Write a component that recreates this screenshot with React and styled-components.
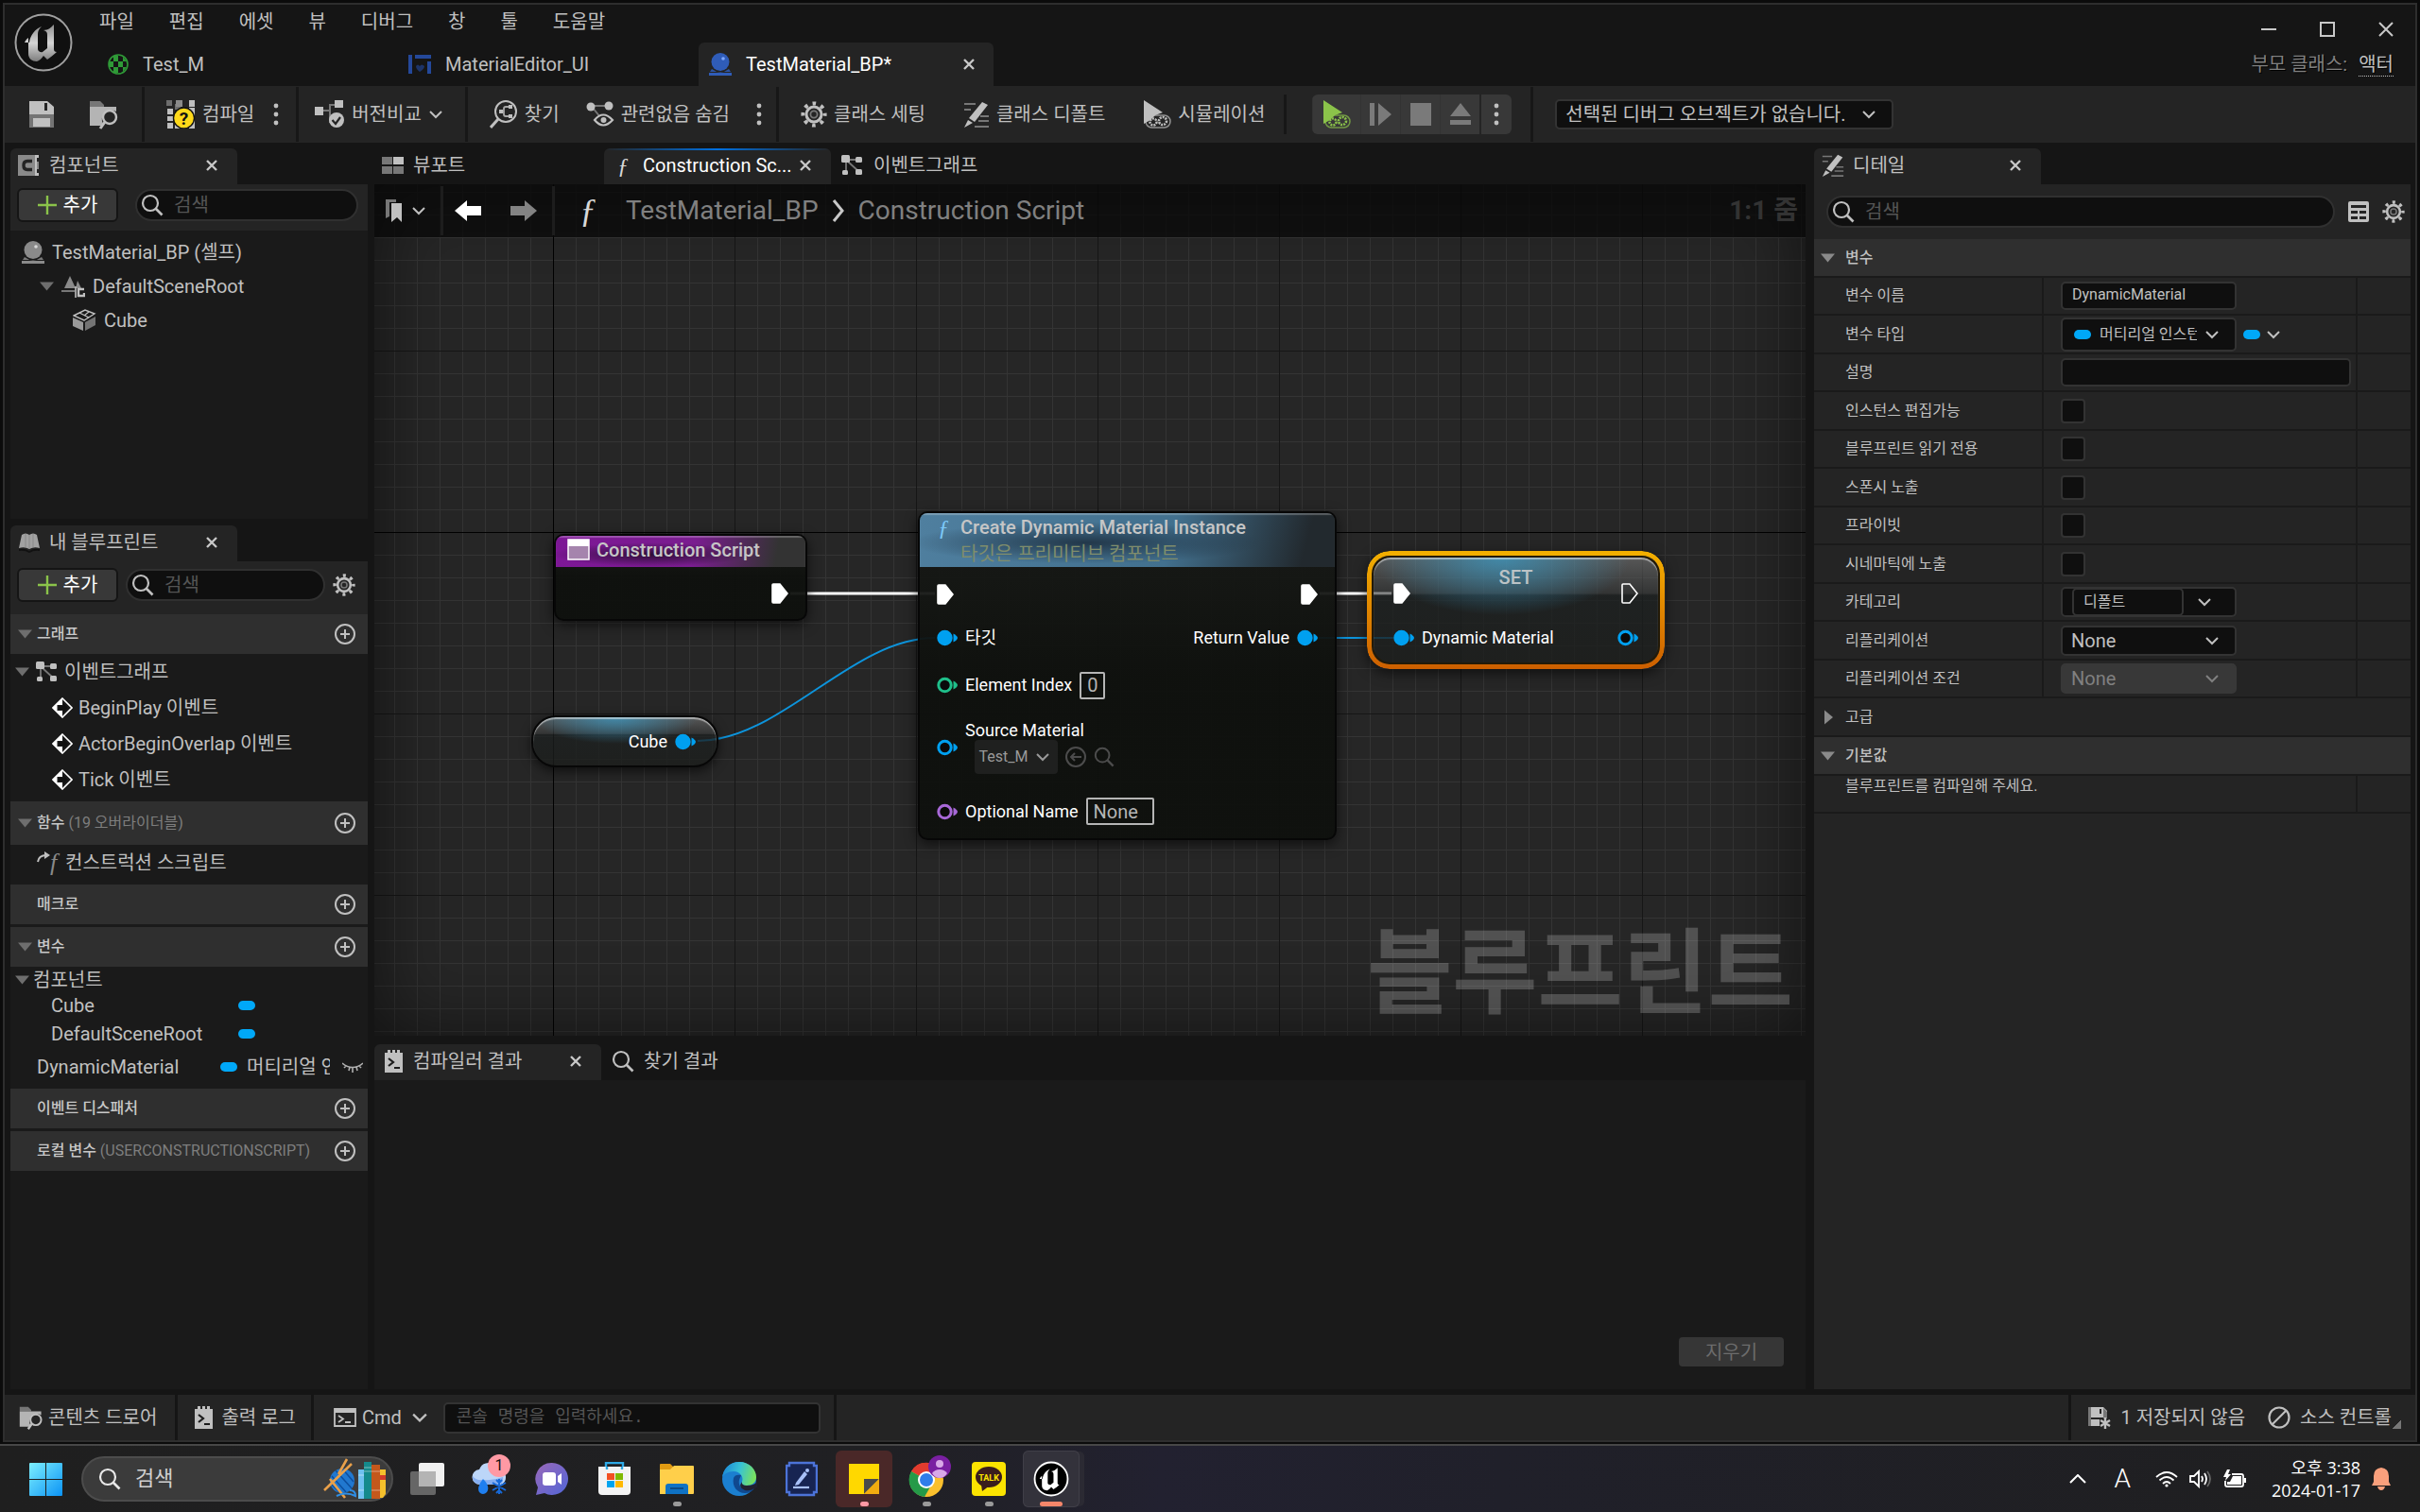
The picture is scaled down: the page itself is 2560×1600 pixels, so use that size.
import React from 'react'
import styled, { createGlobalStyle, css } from 'styled-components'

const GlobalStyle = createGlobalStyle`
  * { box-sizing: border-box; }
  body {
    margin: 0;
    background: #0b0b0b;
    color: #c0c0c0;
    font-family: Roboto, "Noto Sans CJK KR", sans-serif;
    font-size: 20px;
    line-height: 24px;
    font-weight: 400;
  }
  button, input, select {
    margin: 0;
    padding: 0;
    border: none;
    background: none;
    color: inherit;
    font: inherit;
  }
  a { color: inherit; text-decoration: none; }
  svg { display: block; flex: none; }
  h2, ul { margin: 0; padding: 0; font: inherit; list-style: none; }
`

/* ---------- small icons ---------- */

const Chevron = ({ size = 14, color = '#c0c0c0' }) => (
  <svg width={size} height={size} viewBox="0 0 14 14" fill="none" stroke={color} strokeWidth="2">
    <path d="M1 4l6 6 6-6" />
  </svg>
)

const Triangle = ({ right, color = '#6e6e6e' }) => (
  <svg width="15" height="16" viewBox="0 0 15 16" fill={color}>
    {right ? <path d="M4 0.5l9 7.5-9 7.5z" /> : <path d="M0 3.5h15l-7.5 9z" />}
  </svg>
)

const SearchIcon = ({ size = 24, color = '#c0c0c0' }) => (
  <svg width={size} height={size} viewBox="0 0 24 24" fill="none" stroke={color} strokeWidth="2.2">
    <circle cx="10" cy="10" r="8" />
    <path d="M15.5 15.5l7 7" strokeWidth="2.6" />
  </svg>
)

const CloseIcon = () => (
  <svg width="12" height="12" viewBox="0 0 12 12" stroke="#c8c8c8" strokeWidth="2.4">
    <path d="M1 1l10 10M11 1L1 11" />
  </svg>
)

const Dots = () => (
  <svg width="6" height="24" viewBox="0 0 6 24" fill="#c0c0c0">
    <circle cx="3" cy="3" r="2.4" />
    <circle cx="3" cy="12" r="2.4" />
    <circle cx="3" cy="21" r="2.4" />
  </svg>
)

const GearIcon = ({ size = 24 }) => (
  <svg width={size} height={size} viewBox="0 0 28 28" fill="none" stroke="#c0c0c0">
    <circle cx="14" cy="14" r="8" strokeWidth="3" />
    <circle cx="14" cy="14" r="3.6" stroke="#777" strokeWidth="1.8" />
    <circle cx="14" cy="14" r="11.6" strokeWidth="4" strokeDasharray="3.6 5.51" strokeDashoffset="1.8" />
  </svg>
)

const PlusCircle = () => (
  <svg width="22" height="22" viewBox="0 0 22 22" fill="none" stroke="#c0c0c0" strokeWidth="2">
    <circle cx="11" cy="11" r="10" />
    <path d="M11 6v10M6 11h10" />
  </svg>
)

const PlusGreen = () => (
  <svg width="20" height="20" viewBox="0 0 20 20" stroke="#8bc34a" strokeWidth="2.4">
    <path d="M10 0v20M0 10h20" />
  </svg>
)

const SaveIcon = () => (
  <svg width="28" height="28" viewBox="0 0 28 28" fill="#c0c0c0">
    <path d="M1 0h19l7 6v8H1z" />
    <path d="M17 2h3v8h-3z" fill="#242424" />
    <path d="M1 14h26v14H1z" fill="#747474" />
    <path d="M5 18h18v9H5z" />
  </svg>
)

const FolderFind = ({ size = 32 }) => (
  <svg width={size} height={size} viewBox="0 0 32 32">
    <path d="M1 4V2h11l4 4h0v2H1z" fill="#777" />
    <path d="M1 8h28v5a10 10 0 0 0-14 13v2H1z" fill="#b4b4b4" />
    <circle cx="22" cy="19" r="7" fill="none" stroke="#c0c0c0" strokeWidth="2.4" />
    <path d="M17 24l-5 7" stroke="#c0c0c0" strokeWidth="3" />
  </svg>
)

const CompileIcon = () => (
  <svg width="31" height="30" viewBox="0 0 31 30">
    <path d="M0 0h6v6H0zM9 4h6v6H9z" fill="#6d6d6d" />
    <path d="M10 0h7v7h-7zM16 8h6v6h-6z" fill="#8a8a8a" />
    <path d="M24 0h6v7h-6zM1 9h6v6H1zM1 17h6v5H1zM1 24h6v6H1zM9 23h13v7H9zM24 8h6v22h-6z" fill="#c0c0c0" />
    <circle cx="18.5" cy="19" r="11" fill="#ffd91a" stroke="#111" strokeWidth="1.4" />
    <text x="18.5" y="26" textAnchor="middle" fontFamily="Roboto" fontWeight="700" fontSize="19" fill="#111">?</text>
  </svg>
)

const DiffIcon = () => (
  <svg width="32" height="30" viewBox="0 0 32 30">
    <path d="M9 11h7V5h6M16 11v12h4" fill="none" stroke="#777" strokeWidth="2" />
    <path d="M0 7h9v9H0zM21 0h9v8h-9z" fill="#c0c0c0" />
    <circle cx="23" cy="21" r="8" fill="#c0c0c0" />
    <path d="M18.5 21l3.5 4 5-7" fill="none" stroke="#242424" strokeWidth="2.2" />
  </svg>
)

const FindIcon = () => (
  <svg width="30" height="30" viewBox="0 0 30 30" fill="none" stroke="#c0c0c0">
    <circle cx="17" cy="12" r="11" strokeWidth="2" />
    <path d="M9 20l-8 9" strokeWidth="3" />
    <path d="M12 12h3M22 7h-5q-2 0-2 2v6q0 2 2 2h5" stroke="#a8a8a8" strokeWidth="1.8" />
    <path d="M10 12h4M20 7h4M20 17h4" strokeWidth="4" />
  </svg>
)

const HideIcon = () => (
  <svg width="30" height="28" viewBox="0 0 30 28">
    <path d="M6 5h17M7 7l8 10" stroke="#777" strokeWidth="2" />
    <circle cx="5" cy="6" r="4.5" fill="#c0c0c0" />
    <circle cx="24" cy="5" r="4.5" fill="#c0c0c0" />
    <path d="M9 20q9-11 19 0q-10 11-19 0z" fill="#242424" stroke="#c0c0c0" strokeWidth="2.2" />
    <circle cx="18.5" cy="20" r="3" fill="#c0c0c0" />
  </svg>
)

const PencilIcon = ({ size = 28 }) => (
  <svg width={size} height={size} viewBox="0 0 28 28">
    <path d="M1 3h12M1 9h7M18 16h9M16 21h11M12 27h15" stroke="#777" strokeWidth="1.8" />
    <path d="M20 1l6 3-14 18-6-4z" fill="#c0c0c0" />
    <path d="M5 20l5 3-9 5z" fill="#c0c0c0" />
  </svg>
)

const PlayGear = ({ color }) => (
  <svg width="30" height="32" viewBox="0 0 30 32" fill="none" stroke={color}>
    <path d="M1 1l20 13-8 3-5 5-7 4z" fill={color} stroke="none" />
    <rect x="3" y="17" width="26" height="13" rx="6.5" strokeWidth="1.5" opacity="0.7" />
    <circle cx="11" cy="24" r="3.5" strokeWidth="2.5" strokeDasharray="2 1" />
    <circle cx="21" cy="23" r="4" strokeWidth="2.6" strokeDasharray="2 1" />
  </svg>
)

const StepIcon = () => (
  <svg width="24" height="26" viewBox="0 0 24 26" fill="#7a7a7a">
    <path d="M0 1h5v24H0zM9 1l14 12L9 25z" />
  </svg>
)
const StopIcon = () => (
  <svg width="24" height="26" viewBox="0 0 24 26" fill="#7a7a7a"><path d="M1 1h22v24H1z" /></svg>
)
const EjectIcon = () => (
  <svg width="24" height="26" viewBox="0 0 24 26" fill="#7a7a7a">
    <path d="M12 1l11 14H1zM1 19h22v5H1z" />
  </svg>
)

const ComponentIcon = () => (
  <svg width="22" height="22" viewBox="0 0 22 22">
    <path d="M0 0h22v3h-3v4h3v8h-3v4h3v3H0z" fill="#8a8a8a" />
    <path d="M15 6.5H10Q6 6.500 6 11t4 4.500h5" fill="none" stroke="#242424" strokeWidth="3.4" />
    <path d="M18 0h4v3h-2v16h2v3h-4z" fill="#c0c0c0" />
  </svg>
)

const SphereIcon = ({ color = '#8a8a8a', light = '#d8d8d8' }) => (
  <svg width="24" height="24" viewBox="0 0 24 24" fill={color}>
    <circle cx="12" cy="9.5" r="9.5" />
    <path d="M3 17q9 7 18 0l2 3H1z" opacity="0.85" />
    <path d="M0 21h24v3H0z" />
    <circle cx="15" cy="6" r="1.8" fill={light} />
  </svg>
)

const SceneIcon = () => (
  <svg width="25" height="24" viewBox="0 0 25 24">
    <path d="M9 1l6 13H3zM17 6l4 8h-6z" fill="#8a8a8a" />
    <path d="M0 16h14v2H0z" fill="#777" />
    <path d="M24 15h-6v7h6v-3" fill="none" stroke="#c0c0c0" strokeWidth="2.4" />
    <path d="M15 12v12" stroke="#c0c0c0" strokeWidth="1.6" />
  </svg>
)

const CubeIcon = () => (
  <svg width="25" height="24" viewBox="0 0 25 24">
    <path d="M0 9l11 5v9L0 18z" fill="#9a9a9a" />
    <path d="M24 8l-11 6v9l11-6z" fill="#747474" />
    <path d="M1 7l12-6 10 4-11 7z" fill="#1a1a1a" stroke="#c0c0c0" strokeWidth="1.4" />
    <path d="M7 4l10 5M12 7l5-4" stroke="#c0c0c0" strokeWidth="1.2" />
  </svg>
)

const BookIcon = () => (
  <svg width="24" height="22" viewBox="0 0 24 22">
    <path d="M1 17L4 3q4-3 8 0 4-3 8 0l3 14q-6-2-11 1-5-3-11-1z" fill="#a2a2a2" />
    <path d="M12 3v15M8 2v14M16 2v14" stroke="#8a8a8a" strokeWidth="1" />
    <path d="M1 18q6-1 11 2 5-3 11-2v2q-6-1-11 2-5-3-11-2z" fill="#111" />
  </svg>
)

const GraphIcon = () => (
  <svg width="23" height="22" viewBox="0 0 23 22">
    <path d="M6 5h12M5 6v12M7 7l12 11" stroke="#777" strokeWidth="1.8" />
    <rect x="0" y="0" width="9" height="8" rx="1.5" fill="#c0c0c0" />
    <rect x="15" y="2" width="7" height="6" rx="1.5" fill="#c0c0c0" />
    <rect x="1" y="16" width="6" height="5" rx="1.5" fill="#c0c0c0" />
    <rect x="15" y="15" width="7" height="6" rx="1.5" fill="#c0c0c0" />
  </svg>
)

const ViewportIcon = () => (
  <svg width="23" height="18" viewBox="0 0 23 18">
    <path d="M0 0h11v8H0zM0 10h11v8H0zM12 10h11v8H12z" fill="#777" />
    <path d="M12 0h11v8H12z" fill="#c0c0c0" />
  </svg>
)

const EventIcon = () => (
  <svg width="22" height="22" viewBox="0 0 22 22">
    <path d="M11 1l10 10-10 10L1 11z" fill="none" stroke="#fff" strokeWidth="1.6" />
    <path d="M11 1v7H5.5v6H11v7L1 11z" fill="#fff" />
    <path d="M7 9h5V6l5 5-5 5v-3H7z" fill="#111" />
  </svg>
)

const OverrideIcon = () => (
  <svg width="14" height="12" viewBox="0 0 14 12" fill="none" stroke="#c0c0c0" strokeWidth="2">
    <path d="M1 11q1-7 9-7" />
    <path d="M8 0l6 4-6 4z" fill="#c0c0c0" stroke="none" />
  </svg>
)

const EyeClosed = () => (
  <svg width="22" height="12" viewBox="0 0 22 12" fill="none" stroke="#b0b0b0" strokeWidth="1.6">
    <path d="M0 2q11 9 22 0M4 5L2 7M8 6L7 10M11 7v5M15 6l1 4M18 5l2 2" />
  </svg>
)

const LogIcon = () => (
  <svg width="19" height="24" viewBox="0 0 19 24">
    <path d="M0 3h3V0h3v3h2V0h3v3h2V0h3v3h3v21H0z" fill="#c0c0c0" />
    <path d="M4 9l5 4-5 4M10 19h6" fill="none" stroke="#1c1c1c" strokeWidth="2.2" />
  </svg>
)

const TerminalIcon = () => (
  <svg width="24" height="20" viewBox="0 0 24 20" fill="none" stroke="#c0c0c0" strokeWidth="1.8">
    <path d="M1 1h22v18H1z" />
    <path d="M1 3h22" strokeWidth="4" />
    <path d="M5 8l5 3.500L5 15M12 15h6" />
  </svg>
)

const UnsavedIcon = () => (
  <svg width="24" height="24" viewBox="0 0 24 24">
    <path d="M0 1h16l4 4v7H0z" fill="#c0c0c0" />
    <path d="M0 1h3v20H0zM16 2l4 4v7h-4z" fill="#777" />
    <path d="M12 3h2v5h-2z" fill="#242424" />
    <path d="M3 14h9v7H3z" fill="#c0c0c0" />
    <path d="M18 12v12M13 15l10 6M23 15l-10 6" stroke="#c0c0c0" strokeWidth="2.4" />
  </svg>
)

const BlockIcon = () => (
  <svg width="24" height="24" viewBox="0 0 24 24" fill="none" stroke="#c0c0c0" strokeWidth="2.2">
    <circle cx="12" cy="12" r="10.5" />
    <path d="M19 5L5 19" />
  </svg>
)

const TableIcon = () => (
  <svg width="22" height="22" viewBox="0 0 22 22">
    <rect width="22" height="22" rx="2" fill="#c0c0c0" />
    <path d="M3 4h16v3H3zM3 10h7v3H3zM12 10h7v3h-7zM3 16h7v3H3zM12 16h7v3h-7z" fill="#242424" />
  </svg>
)

const BookmarkIcon = () => (
  <svg width="18" height="24" viewBox="0 0 18 24">
    <path d="M0 0h11v3H4v15l-4 2z" fill="#777" />
    <path d="M6 4h11v20l-5-5-6 5z" fill="#c0c0c0" />
  </svg>
)

const ArrowIcon = ({ back }) => (
  <svg width="28" height="22" viewBox="0 0 28 22" fill={back ? '#fff' : '#838383'}>
    {back ? <path d="M0 11L13 0v6h15v10H13v6z" /> : <path d="M28 11L15 0v6H0v10h15v6z" />}
  </svg>
)

const UnrealMark = () => (
  <path
    d="M10 25c1-8 6-14 13-17-3 3-4 5-4 8v16c0 2 3 4 5 3l5-4V17c0-3-1-4-4-5 5 0 8-3 11-6v26c0 2 1 3 3 3-3 3-6 5-10 8l-4-4c-2 3-4 5-7 6-5 0-9-3-9-8V20c-2 1-3 3-4 5z"
    transform="translate(3 3)"
  />
)

const UnrealLogo = () => (
  <svg width="62" height="62" viewBox="0 0 62 62">
    <defs>
      <linearGradient id="metal" x1="0" y1="0" x2="0" y2="1">
        <stop offset="0" stopColor="#8f8f8f" />
        <stop offset="0.5" stopColor="#d5d5d5" />
        <stop offset="1" stopColor="#7d7d7d" />
      </linearGradient>
    </defs>
    <circle cx="31" cy="31" r="29.5" fill="#101010" stroke="#a0a0a0" strokeWidth="2" />
    <g fill="url(#metal)" transform="translate(3 3)"><UnrealMark /></g>
  </svg>
)

const MaterialIcon = () => (
  <svg width="22" height="22" viewBox="0 0 22 22">
    <circle cx="11" cy="11" r="10" fill="#151515" stroke="#2f9a37" strokeWidth="1.6" />
    <path d="M6 2h5v6H6zM11 8h5v6h-5zM16 3l4 5h-4zM1 8h5v6H1zM6 14h5v6H6zM16 14h4l-4 5z" fill="#2f9a37" />
  </svg>
)

const WidgetIcon = () => (
  <svg width="24" height="20" viewBox="0 0 24 20" fill="#24489a">
    <path d="M0 0h4v20H0zM7 0h17v4H7zM20 7h4v13h-4z" />
    <path d="M8 12q2-3 4 0 2-3 5 0 0 3-5 6-4-3-4-6z" fill="#1d3468" />
  </svg>
)

/* ---------- window chrome ---------- */

const Page = styled.div`
  height: 100vh;
  min-height: 1200px;
  display: flex;
  flex-direction: column;
`

const EditorWindow = styled.div`
  flex: 1;
  min-height: 0;
  margin: 3px 3px 2px;
  border: 2px solid #2e2e2e;
  background: #151515;
  display: flex;
  flex-direction: column;
`

const TitleBar = styled.header`
  height: 86px;
  display: flex;
  padding: 0 23px 0 10px;
`

const LogoSlot = styled.div`
  padding-top: 9px;
  margin-right: 26px;
`

const TitleMain = styled.div`
  flex: 1;
  display: flex;
  flex-direction: column;
  justify-content: space-between;
`

const MenuBar = styled.nav`
  height: 36px;
  display: flex;
  align-items: center;
  gap: 37px;
  padding-left: 2px;
`

const DocTabs = styled.div`
  display: flex;
  gap: 6px;
`

const DocTab = styled.div`
  width: 312px;
  height: 46px;
  padding: 0 20px 0 11px;
  border-radius: 6px 6px 0 0;
  display: flex;
  align-items: center;
  justify-content: space-between;
  background: ${p => (p.$active ? '#242424' : 'none')};
  color: ${p => (p.$active ? '#fff' : 'inherit')};
`

const TabLabel = styled.button`
  display: flex;
  align-items: center;
  gap: ${p => p.$gap || 15}px;
  white-space: nowrap;
`

const TitleSide = styled.div`
  display: flex;
  flex-direction: column;
  justify-content: space-between;
  align-items: flex-end;
`

const WindowButtons = styled.div`
  height: 52px;
  display: flex;
  align-items: center;
  gap: 46px;
`

const ParentClass = styled.div`
  height: 46px;
  margin-top: -12px;
  display: flex;
  align-items: center;
  gap: 12px;
  color: #808080;
  text-shadow: 1px 1px 0 #000;
  a {
    color: #c0c0c0;
    border-bottom: 1px dotted #c0c0c0;
  }
`

const Toolbar = styled.div`
  height: 60px;
  display: flex;
  align-items: center;
  background: #242424;
`

const ToolGroup = styled.div`
  height: ${p => (p.$short ? 42 : 58)}px;
  display: flex;
  align-items: center;
  gap: ${p => p.$gap || 24}px;
  padding: 0 ${p => p.$right}px 0 ${p => p.$left}px;
  border-right: 3px solid #171717;
`

const ToolButton = styled.button`
  display: flex;
  align-items: center;
  gap: 7px;
  white-space: nowrap;
`

const PlayGroup = styled.div`
  display: flex;
  height: 42px;
  border-radius: 6px;
  overflow: hidden;
  background: #383838;
`

const PlayButton = styled.button`
  width: ${p => p.$w || 42}px;
  display: flex;
  align-items: center;
  justify-content: center;
  border-left: ${p => (p.$split ? '2px solid #242424' : '1px solid #333')};
`

const SelectSlot = styled.div`
  padding-left: 23px;
`

const SelectBox = styled.div`
  display: grid;
  align-items: center;
  width: ${p => p.$w}px;
  height: ${p => p.$h || 32}px;
  border: 2px solid ${p => (p.$muted ? '#383838' : '#333')};
  border-radius: 5px;
  background: ${p => (p.$muted ? '#383838' : '#0f0f0f')};
  color: ${p => (p.$muted ? '#808080' : 'inherit')};
  select {
    grid-area: 1 / 1;
    width: 100%;
    height: 100%;
    appearance: none;
    padding: 0 ${p => p.$pr || 32}px 0 ${p => p.$pl || 9}px;
    outline: none;
    opacity: 1;
  }
  svg {
    grid-area: 1 / 1;
    justify-self: end;
    margin-right: 17px;
    pointer-events: none;
  }
  svg + svg {
    justify-self: start;
    margin: 0 0 0 12px;
  }
`

/* ---------- docking panels ---------- */

const Workspace = styled.main`
  flex: 1;
  min-height: 0;
  display: flex;
  gap: 7px;
  padding: 6px 5px 6px 6px;
`

const SideColumn = styled.div`
  width: 378px;
  display: flex;
  flex-direction: column;
  gap: 7px;
`

const CenterColumn = styled.div`
  flex: 1;
  min-width: 0;
  display: flex;
  flex-direction: column;
  gap: 9px;
`

const DetailsColumn = styled.div`
  width: 631px;
  margin-left: 2px;
  display: flex;
  flex-direction: column;
`

const Panel = styled.section`
  ${p => (p.$h ? css`height: ${p.$h}px;` : css`flex: 1;`)}
  min-height: 0;
  display: flex;
  flex-direction: column;
`

const TabStrip = styled.div`
  display: flex;
  flex: none;
  height: 38px;
`

const PanelTab = styled.div`
  width: ${p => p.$w || 240}px;
  padding: 0 21px 2px ${p => p.$left || 8}px;
  border-radius: 6px 6px 0 0;
  display: flex;
  align-items: center;
  justify-content: space-between;
  background: ${p => (p.$active ? '#242424' : 'none')};
  ${p => p.$focus && css`
    color: #fff;
    background: linear-gradient(90deg, transparent, #0070e0, transparent) top / 100% 2px no-repeat, #242424;
  `}
`

const PanelBody = styled.div`
  flex: 1;
  min-height: 0;
  background: ${p => (p.$light ? '#242424' : '#1a1a1a')};
`

const PanelTools = styled.div`
  flex: none;
  height: ${p => p.$h}px;
  padding: 0 ${p => p.$right || 10}px ${p => (p.$centered ? 0 : 6)}px ${p => (p.$centered ? 13 : 7)}px;
  display: flex;
  align-items: center;
  gap: ${p => p.$gap || 8}px;
  background: #242424;
`

const AddButton = styled.button`
  width: 107px;
  height: 36px;
  display: flex;
  align-items: center;
  justify-content: center;
  gap: 7px;
  border: 2px solid #151515;
  border-radius: 6px;
  background: #383838;
  color: #fff;
`

const SearchField = styled.label`
  flex: 1;
  min-width: 0;
  height: 34px;
  padding: 0 16px 0 4px;
  display: flex;
  align-items: center;
  gap: 11px;
  border: 2px solid #303030;
  border-radius: 17px;
  background: #0f0f0f;
  input {
    flex: 1;
    min-width: 0;
    outline: none;
  }
  input::placeholder { color: #555; opacity: 1; }
`

const IconButton = styled.button`
  display: flex;
`

/* ---------- tree lists ---------- */

const Tree = styled.ul`
  padding-top: ${p => p.$pt || 0}px;
  padding-bottom: ${p => p.$pb || 0}px;
`

const TreeRow = styled.li`
  height: ${p => p.$h || 38}px;
  padding-left: ${p => p.$indent}px;
  display: flex;
  align-items: center;
  gap: ${p => p.$gap || 8}px;
  white-space: nowrap;
`

const VarName = styled.span`
  width: ${p => p.$w}px;
`

const VarType = styled.span`
  width: 88px;
  overflow: hidden;
  margin-right: 3px;
`

const Pill = styled.span`
  flex: none;
  width: 18px;
  height: 10px;
  border-radius: 5px;
  background: #00a8f8;
`

const SectionBar = styled.div`
  height: ${p => p.$h || 42}px;
  margin-bottom: ${p => p.$mb || 0}px;
  padding: 0 13px 0 8px;
  display: flex;
  align-items: center;
  gap: 5px;
  background: #2f2f2f;
  font-size: 16px;
  h2 {
    flex: 1;
    font-weight: 500;
    color: #c8c8c8;
  }
  small {
    font-size: 16px;
    font-weight: 400;
    color: #7e7e7e;
  }
`

const Spacer = styled.span`
  width: 15px;
`

const FGlyph = styled.span`
  font-family: "Liberation Serif", serif;
  font-style: italic;
  font-size: ${p => p.$size || 24}px;
  line-height: 24px;
  color: ${p => p.$color || '#d8d8d8'};
`

const OverrideMark = styled.span`
  width: 22px;
  display: flex;
  align-items: flex-start;
`

/* ---------- graph ---------- */

const Graph = styled.div`
  position: relative;
  flex: 1;
  min-height: 0;
  overflow: hidden;
  background:
    linear-gradient(#000, #000) 189px 0 / 1px 100% no-repeat,
    linear-gradient(#000, #000) 0 368px / 100% 1px no-repeat,
    linear-gradient(90deg, #161616 1px, transparent 1px) 189px 0 / 192px 192px,
    linear-gradient(#161616 1px, transparent 1px) 0 176px / 192px 192px,
    linear-gradient(90deg, #343434 1px, transparent 1px) 21px 0 / 24px 24px,
    linear-gradient(#343434 1px, transparent 1px) 0 8px / 24px 24px,
    #262626;
  box-shadow: inset 0 0 80px rgba(0, 0, 0, 0.55);
`

const GraphHeader = styled.div`
  height: 56px;
  padding: 0 8px 0 12px;
  display: flex;
  align-items: center;
  background: rgba(8, 8, 8, 0.75);
  color: #808080;
  font-size: 28px;
  line-height: 32px;
`

const HeaderCell = styled.div`
  height: 52px;
  display: flex;
  align-items: center;
  gap: ${p => p.$gap}px;
  padding-right: 16px;
  margin-right: ${p => p.$after}px;
  border-right: 3px solid #1d1d1d;
`

const Crumbs = styled.div`
  flex: 1;
  display: flex;
  align-items: center;
  gap: 14px;
`

const CrumbIcon = styled.span`
  width: 35px;
  display: flex;
`

const ZoomLabel = styled.strong`
  color: #333;
  font-weight: 700;
`

const Wires = styled.svg`
  position: absolute;
  left: 0;
  top: 0;
  width: 100%;
  height: 100%;
`

const Watermark = styled.div`
  position: absolute;
  right: 13px;
  bottom: 9px;
  font-size: 98px;
  line-height: 112px;
  font-weight: 700;
  color: rgba(255, 255, 255, 0.2);
`

const Node = styled.div`
  position: absolute;
  left: ${p => p.$x}px;
  top: ${p => p.$y}px;
  width: ${p => p.$w}px;
  border: 2px solid #070707;
  border-radius: 10px;
  background: linear-gradient(rgba(24, 26, 23, 0.94), rgba(14, 16, 13, 0.95) 50%);
  box-shadow: 0 4px 14px rgba(0, 0, 0, 0.6);
  color: #fff;
  font-size: 18px;
  overflow: hidden;
`

const NodeTitle = styled.div`
  height: ${p => p.$h}px;
  padding: 3px 10px 0 ${p => p.$left}px;
  display: flex;
  gap: ${p => p.$gap}px;
  align-items: flex-start;
  color: #c6c6c6;
  font-size: 20px;
  font-weight: 500;
  white-space: nowrap;
  box-shadow: inset 0 2px 1px rgba(255, 255, 255, 0.25);
  background: ${p => (p.$kind === 'event'
    ? 'radial-gradient(ellipse at 38% 60%, rgba(20,10,25,.75), transparent 45%), linear-gradient(100deg, #7d1796, #7a1d8f 55%, #333 88%)'
    : 'radial-gradient(ellipse at 40% 55%, rgba(25,40,55,.8), transparent 50%), linear-gradient(105deg, #4f7f9f, #42708e 60%, #22292e 92%)')};
`

const NodeSub = styled.div`
  margin-top: 4px;
  font-weight: 400;
  color: #7f8d6c;
`

const PinRow = styled.div`
  height: ${p => p.$h}px;
  padding: ${p => p.$pt || 0}px ${p => p.$px || 18}px 0;
  display: flex;
  align-items: center;
  justify-content: ${p => (p.$end ? 'flex-end' : 'space-between')};
`

const Pin = styled.label`
  display: flex;
  align-items: center;
  gap: 8px;
`

const NodeInput = styled.input`
  width: ${p => p.$w}px;
  height: 29px;
  padding-left: 6px;
  border: 2px solid #b5b5b5;
  border-radius: 2px;
  color: #b5b5b5;
  font-size: 20px;
`

const AssetStack = styled.div`
  display: flex;
  flex-direction: column;
  line-height: 20px;
`

const AssetRow = styled.div`
  display: flex;
  align-items: center;
  gap: 8px;
  margin-left: 10px;
`

const AssetButton = styled.button`
  width: 88px;
  height: 36px;
  display: flex;
  align-items: center;
  justify-content: center;
  gap: 9px;
  padding-right: 4px;
  border-radius: 4px;
  background: #1f201f;
  color: #9a9a9a;
  font-size: 16px;
`

const glass = css`
  background:
    radial-gradient(ellipse 45% 55% at 45% 0, rgba(60, 150, 190, 0.8), transparent),
    linear-gradient(rgba(120, 120, 120, 0.6), rgba(60, 62, 62, 0.6) 34%, rgba(28, 32, 32, 0.75) 36%, rgba(28, 30, 28, 0.8));
`

const VarNode = styled(Node)`
  height: 55px;
  padding: 0 22px;
  border-radius: 26px;
  display: flex;
  align-items: center;
  justify-content: flex-end;
  ${glass}
  box-shadow: inset 0 2px 1px rgba(255, 255, 255, 0.5), 0 4px 12px rgba(0, 0, 0, 0.6);
`

const SetFrame = styled(Node)`
  border: none;
  border-radius: 24px;
  padding: 5px;
  background: none;
  &::before {
    content: '';
    position: absolute;
    inset: 0;
    border-radius: 24px;
    border: 5px solid transparent;
    background: linear-gradient(#f3b000, #e08600 50%, #cc5f00) border-box;
    mask: linear-gradient(#000 0 0) padding-box exclude, linear-gradient(#000 0 0);
  }
`

const SetBody = styled.div`
  height: 115px;
  border-radius: 20px;
  border: 2px solid #231a08;
  ${glass}
  box-shadow: inset 0 2px 1px rgba(255, 255, 255, 0.5);
`

const SetTitle = styled.div`
  height: 29px;
  padding-top: 9px;
  text-align: center;
  font-size: 20px;
  font-weight: 500;
  color: #bcc3c6;
`

const ExecPin = ({ hollow }) => (
  <svg width="18" height="22" viewBox="0 0 18 22" fill={hollow ? 'none' : '#fff'} stroke="#fff" strokeWidth="1.6">
    <path d="M1 2q0-1 1-1h7l8 10-8 10H2q-1 0-1-1z" />
  </svg>
)

const DataPin = ({ color = '#00a0f0', hollow }) => (
  <svg width="22" height="18" viewBox="0 0 22 18">
    <circle cx="8.5" cy="9" r="6.7" fill={hollow ? '#0a0a0a' : color} stroke={color} strokeWidth="3" />
    <path d="M17.5 4.5q4 2 4.5 4.5-.5 2.500-4.500 4.500z" fill={color} />
  </svg>
)

/* ---------- compiler results ---------- */

const ResultsBody = styled(PanelBody)`
  display: flex;
  align-items: flex-end;
  justify-content: flex-end;
  padding: 24px 23px;
`

const ClearButton = styled.button`
  width: 111px;
  height: 31px;
  border-radius: 4px;
  background: #363636;
  color: #6c6c6c;
`

/* ---------- details ---------- */

const DetailRow = styled.div`
  height: ${p => p.$h || 40}px;
  display: grid;
  grid-template-columns: 241px 1fr 58px;
  border-bottom: 2px solid #1a1a1a;
  font-size: 16px;
  > * {
    display: flex;
    align-items: center;
    border-left: 2px solid #1a1a1a;
  }
  > :first-child {
    border-left: none;
    padding-left: 33px;
  }
  > :nth-child(2) {
    padding-left: 18px;
    gap: 7px;
  }
`

const DetailHead = styled.h2`
  height: 41px;
  display: flex;
  align-items: center;
  gap: 11px;
  padding-left: 7px;
  border-bottom: 2px solid #1a1a1a;
  background: ${p => (p.$plain ? 'none' : '#2f2f2f')};
  font-size: 16px;
  font-weight: ${p => (p.$plain ? 400 : 500)};
`

const TextInput = styled.input`
  width: ${p => p.$w}px;
  height: 30px;
  padding: 0 10px 4px;
  border: 2px solid #333;
  border-radius: 5px;
  background: #0f0f0f;
  font-size: 16px;
`

const CheckBox = styled.input`
  appearance: none;
  width: 26px;
  height: 26px;
  border: 2px solid #333;
  border-radius: 4px;
  background: #0f0f0f;
`

const ComboBox = styled.div`
  width: 186px;
  height: 32px;
  padding: 0 25px 0 10px;
  display: flex;
  align-items: center;
  justify-content: space-between;
  border: 2px solid #333;
  border-radius: 5px;
  background: #0f0f0f;
`

const BigSelect = styled(SelectBox)`
  font-size: 20px;
`

const MessageRow = styled(DetailRow)`
  grid-template-columns: 1fr 58px;
  > :nth-child(2) { padding: 0; }
`

const Notice = styled.p`
  margin: 0;
  align-self: start;
  line-height: 22px;
`

const detailChecks = [
  { id: 'instance', label: '인스턴스 편집가능', h: 41 },
  { id: 'readonly', label: '블루프린트 읽기 전용' },
  { id: 'spawn', label: '스폰시 노출', h: 41 },
  { id: 'private', label: '프라이빗' },
  { id: 'cinematic', label: '시네마틱에 노출', h: 41 },
]

/* ---------- status bar ---------- */

const StatusBar = styled.footer`
  height: 48px;
  display: flex;
  align-items: stretch;
  background: #242424;
`

const StatusItem = styled.div`
  display: flex;
  align-items: center;
  gap: ${p => p.$gap || 9}px;
  padding: 0 ${p => p.$right}px 0 ${p => p.$left}px;
  border-right: 3px solid #151515;
`

const StatusFill = styled.div`
  flex: 1;
  border-right: 3px solid #151515;
`

const StatusEnd = styled.div`
  display: flex;
  align-items: center;
  gap: 24px;
  padding: 0 15px 0 18px;
`

const StatusButton = styled(ToolButton)`
  gap: 10px;
`

const ConsoleInput = styled.input`
  width: 399px;
  height: 33px;
  margin-left: 11px;
  padding: 0 12px;
  border: 2px solid #333;
  border-radius: 5px;
  background: #0f0f0f;
  font-family: "Liberation Mono", "Noto Sans CJK KR", monospace;
  font-size: 18px;
  &::placeholder { color: #555; opacity: 1; }
`

const Grip = styled.span`
  width: 9px;
  height: 10px;
  align-self: flex-end;
  margin: 0 0 12px -23px;
  background: linear-gradient(135deg, transparent 50%, #777 50%);
`

/* ---------- taskbar ---------- */

const Taskbar = styled.footer`
  height: 72px;
  padding: 0 31px;
  display: flex;
  align-items: center;
  border-top: 2px solid #474747;
  background: linear-gradient(90deg, #1f1f1f, #202023 36%, #222130 48%, #20202a 62%, #1f1f1f);
`

const TaskSearch = styled.label`
  width: 330px;
  height: 48px;
  margin: 0 6px 0 20px;
  padding: 0 4px 0 16px;
  display: flex;
  align-items: center;
  gap: 15px;
  border: 2px solid #4c4c4c;
  border-radius: 24px;
  background: #3b3b3b;
  input {
    flex: 1;
    min-width: 0;
    font-size: 22px;
    outline: none;
  }
  input::placeholder { color: #d0d0d0; opacity: 1; }
`

const TaskButton = styled.button`
  position: relative;
  width: 60px;
  height: 60px;
  margin-right: 6px;
  display: flex;
  align-items: center;
  justify-content: center;
  border-radius: 6px;
  background: ${p => p.$bg || 'none'};
  ${p => p.$wide && css`box-shadow: inset 0 0 0 1px #403f48, 6px 0 0 -1px #2b2a33;`}
  ${p => p.$bar && css`
    &::after {
      content: '';
      position: absolute;
      bottom: 1px;
      width: ${p.$wide ? 24 : 9}px;
      height: 5px;
      border-radius: 3px;
      background: ${p.$bar};
    }
  `}
`

const Badge = styled.span`
  position: absolute;
  right: 8px;
  top: 4px;
  width: 24px;
  height: 24px;
  border-radius: 50%;
  background: #ff99a4;
  color: #111;
  font-size: 16px;
  line-height: 24px;
`

const Tray = styled.div`
  margin-left: auto;
  display: flex;
  align-items: center;
  color: #fff;
`

const TrayItem = styled.button`
  display: flex;
  margin-right: ${p => p.$mr}px;
  font-size: 28px;
  font-weight: 300;
`

const Clock = styled.div`
  margin-right: 12px;
  text-align: right;
  font-family: "Open Sans", "Noto Sans CJK KR", sans-serif;
  font-size: 18px;
  line-height: 24px;
`

const YarnAndBooks = () => (
  <svg width="68" height="44" viewBox="0 0 68 44">
    <circle cx="20" cy="24" r="13" fill="#2178cf" />
    <path d="M9 19l15 17M13 13l17 19M20 11l12 14M8 27l9 9" stroke="#0d4f9e" strokeWidth="1.5" />
    <path d="M25 1L16 17M30 6L1 34M7 22l16 20" stroke="#e9a04a" strokeWidth="2.6" />
    <path d="M14 40q10-5 20 0 0-6-6-6" fill="none" stroke="#2e8fe6" strokeWidth="2" />
    <path d="M37 12h6v31h-6z" fill="#6fc0f0" />
    <path d="M43 4h8v39h-8z" fill="#148a8c" />
    <path d="M51 7h9v36h-9z" fill="#c4581c" />
    <path d="M60 12h6v26l-3 4h-3z" fill="#f4c02c" />
    <path d="M60 18h6v5h-6z" fill="#d23c2a" />
    <path d="M37 18h6M37 34h6M43 10h8M43 14h8M51 14h9M51 34h9" stroke="#ffffff" strokeOpacity="0.45" />
  </svg>
)

const StartIcon = () => (
  <svg width="35" height="35" viewBox="0 0 35 35">
    <defs>
      <linearGradient id="win" gradientUnits="userSpaceOnUse" x1="0" y1="0" x2="35" y2="35">
        <stop offset="0" stopColor="#7df0ff" />
        <stop offset="1" stopColor="#0b93f5" />
      </linearGradient>
    </defs>
    <path d="M0 1q0-1 1-1h16v17H0zM18 0h16q1 0 1 1v16H18zM0 18h17v17H1q-1 0-1-1zM18 18h17v16q0 1-1 1H18z" fill="url(#win)" />
  </svg>
)

const TaskViewIcon = () => (
  <svg width="36" height="36" viewBox="0 0 36 36">
    <rect x="9" y="1" width="27" height="25" rx="2" fill="#f0f0f0" />
    <rect x="0" y="10" width="27" height="25" rx="2" fill="#666" />
    <path d="M9 10h18v16H9z" fill="#b4b4b4" />
  </svg>
)

const WeatherIcon = () => (
  <svg width="38" height="36" viewBox="0 0 38 36">
    <path d="M9 24a8 8 0 0 1-1-16 11 11 0 0 1 20-1 9 9 0 0 1 3 17z" fill="#bcd6f8" />
    <path d="M9 24a8 8 0 0 1-8-9q3 5 12 4 10 1 20-3 1 8-5 8z" fill="#86aef0" />
    <path d="M12 18q8 8 4 14-4 4-8 0-3-5 4-14z" fill="#1f7ff0" />
    <path d="M29 18v16M22 22l14 8M36 22l-14 8M26 19l3 3 3-3M26 33l3-3 3 3" stroke="#1769d8" strokeWidth="2" fill="none" />
  </svg>
)

const ChatIcon = () => (
  <svg width="36" height="36" viewBox="0 0 36 36">
    <defs>
      <linearGradient id="chat" x1="0" y1="0" x2="1" y2="1">
        <stop offset="0" stopColor="#9a68b8" />
        <stop offset="1" stopColor="#5166d8" />
      </linearGradient>
    </defs>
    <path d="M18 1a17 17 0 1 1-8 32L1 35l2-8A17 17 0 0 1 18 1z" fill="url(#chat)" />
    <rect x="8" y="11" width="14" height="14" rx="3" fill="#fff" />
    <path d="M24 15l4-3v12l-4-3z" fill="#fff" />
  </svg>
)

const StoreIcon = () => (
  <svg width="36" height="36" viewBox="0 0 36 36">
    <path d="M9 8V1h18v7" fill="none" stroke="#2ea9e6" strokeWidth="2.4" />
    <path d="M1 5h34v26q0 4-4 4H5q-4 0-4-4z" fill="#f3f3f3" />
    <path d="M10 5v3M26 5v3" stroke="#2ea9e6" strokeWidth="2.4" />
    <path d="M10 12h8v7h-8z" fill="#f25022" />
    <path d="M19 12h8v7h-8z" fill="#7fba00" />
    <path d="M10 20h8v7h-8z" fill="#00a4ef" />
    <path d="M19 20h8v7h-8z" fill="#ffb900" />
  </svg>
)

const ExplorerIcon = () => (
  <svg width="36" height="36" viewBox="0 0 36 36">
    <path d="M0 3q0-1 1-1h10l4 4v4H0z" fill="#e09a12" />
    <path d="M0 8h11l4-4h20q1 0 1 1v28q0 1-1 1H0z" fill="#ffcf4a" />
    <path d="M6 34v-8q0-3 3-3h18q3 0 3 3v8z" fill="#0f72c4" />
    <path d="M11 28h14" stroke="#0b4b86" strokeWidth="2" />
  </svg>
)

const EdgeIcon = () => (
  <svg width="38" height="38" viewBox="0 0 38 38">
    <defs>
      <linearGradient id="edge" x1="0" y1="0.3" x2="1" y2="0.5">
        <stop offset="0" stopColor="#1a86d8" />
        <stop offset="0.5" stopColor="#38c3d4" />
        <stop offset="1" stopColor="#7be25a" />
      </linearGradient>
    </defs>
    <circle cx="19" cy="19" r="18" fill="#1b7fd0" />
    <path d="M1 18C2 8 9 1 19 1c11 0 18 8 18 16 0 6-5 9-10 9-4 0-6-2-5-4 2-5-2-11-9-11-6 0-11 3-12 7z" fill="url(#edge)" />
    <path d="M13 18c-2 9 4 16 12 16 4 0 8-2 10-5-3 1-6 2-9 1-6-1-8-5-7-10 1-3 2-4 2-5-4-1-7 0-8 3z" fill="#10498f" />
    <path d="M38 22q-3 4-11 4-6 0-5-4-5 6 3 9 6 1 10-2l3-1z" fill="#222230" />
  </svg>
)

const NoteIcon = () => (
  <svg width="34" height="38" viewBox="0 0 34 38">
    <path d="M4 2h26v3h3v28h-3v3H4v-3H1V5h3z" fill="#172452" stroke="#4c73d8" strokeWidth="2.4" />
    <path d="M11 23l9-12 3 3-9 11-4 1z" fill="#a8c0f8" />
    <circle cx="23" cy="10" r="2" fill="#a8c0f8" />
    <path d="M8 28h17" stroke="#a8c0f8" strokeWidth="2.2" />
  </svg>
)

const StickyIcon = () => (
  <svg width="34" height="36" viewBox="0 0 34 36">
    <path d="M1 2h32v17L18 34H1z" fill="#ffd800" />
    <path d="M17 34V18h16z" fill="#4a4a4a" />
    <path d="M33 18v16H17z" fill="#f2ac10" />
  </svg>
)

const ChromeIcon = () => (
  <svg width="52" height="50" viewBox="-6 2 52 50">
    <circle cx="20" cy="28" r="18" fill="#fbc02d" />
    <path d="M20 28L4 19a18 18 0 0 1 32 1z" fill="#e33b2e" />
    <path d="M4 19a18 18 0 0 0 14 27l8-14-6-4z" fill="#259a48" />
    <circle cx="20" cy="28" r="9" fill="#fff" />
    <circle cx="20" cy="28" r="7" fill="#2f7de9" />
    <circle cx="34" cy="14" r="12" fill="#7a1fa2" />
    <circle cx="34" cy="11" r="4" fill="#d9a8e8" />
    <path d="M26 21q3-4 8-4t8 4q-3 5-8 5t-8-5z" fill="#d9a8e8" />
  </svg>
)

const TalkIcon = () => (
  <svg width="36" height="36" viewBox="0 0 36 36">
    <rect width="36" height="36" rx="4" fill="#fbe300" />
    <ellipse cx="18" cy="16" rx="14" ry="11" fill="#3a1d1d" />
    <path d="M10 24l1 7 8-6z" fill="#3a1d1d" />
    <text x="18" y="20" textAnchor="middle" fontFamily="Roboto" fontWeight="700" fontSize="9" fill="#fbe300">TALK</text>
  </svg>
)

const UnrealTask = () => (
  <svg width="38" height="38" viewBox="0 0 62 62">
    <circle cx="31" cy="31" r="28.5" fill="#000" stroke="#fff" strokeWidth="3" />
    <g fill="#fff" transform="translate(3 3)"><UnrealMark /></g>
  </svg>
)

/* ---------- page sections ---------- */

const Tab = ({ icon, label, active, focus, w, closable, gap, left }) => (
  <PanelTab $active={active} $focus={focus} $w={w} $left={left}>
    <TabLabel $gap={gap || 11}>{icon}{label}</TabLabel>
    {closable && <IconButton aria-label="close"><CloseIcon /></IconButton>}
  </PanelTab>
)

const Header = () => (
  <TitleBar>
    <LogoSlot><UnrealLogo /></LogoSlot>
    <TitleMain>
      <MenuBar>
        {['파일', '편집', '에셋', '뷰', '디버그', '창', '툴', '도움말'].map(m => <button key={m}>{m}</button>)}
      </MenuBar>
      <DocTabs>
        <DocTab><TabLabel><MaterialIcon />Test_M</TabLabel></DocTab>
        <DocTab><TabLabel><WidgetIcon />MaterialEditor_UI</TabLabel></DocTab>
        <DocTab $active>
          <TabLabel><SphereIcon color="#2f5cb8" light="#7fa8ff" />TestMaterial_BP*</TabLabel>
          <IconButton aria-label="close"><CloseIcon /></IconButton>
        </DocTab>
      </DocTabs>
    </TitleMain>
    <TitleSide>
      <WindowButtons>
        <IconButton aria-label="minimize">
          <svg width="16" height="16" stroke="#c8c8c8" strokeWidth="2"><path d="M0 8h16" /></svg>
        </IconButton>
        <IconButton aria-label="maximize">
          <svg width="16" height="16" stroke="#c8c8c8" strokeWidth="2" fill="none"><path d="M1 1h14v14H1z" /></svg>
        </IconButton>
        <IconButton aria-label="close window">
          <svg width="16" height="16" stroke="#c8c8c8" strokeWidth="2"><path d="M1 1l14 14M15 1L1 15" /></svg>
        </IconButton>
      </WindowButtons>
      <ParentClass>부모 클래스: <a href="#actor">액터</a></ParentClass>
    </TitleSide>
  </TitleBar>
)

const MainToolbar = () => (
  <Toolbar>
    <ToolGroup $left={25} $right={24} $gap={36}>
      <ToolButton aria-label="save"><SaveIcon /></ToolButton>
      <ToolButton aria-label="browse"><FolderFind /></ToolButton>
    </ToolGroup>
    <ToolGroup $left={23} $right={18} $gap={20}>
      <ToolButton><CompileIcon />컴파일</ToolButton>
      <ToolButton aria-label="compile options"><Dots /></ToolButton>
    </ToolGroup>
    <ToolGroup $left={17} $right={24} $gap={8}>
      <ToolButton><DiffIcon />버전비교</ToolButton>
      <Chevron />
    </ToolGroup>
    <ToolGroup $left={23} $right={15} $gap={28}>
      <ToolButton><FindIcon />찾기</ToolButton>
      <ToolButton><HideIcon />관련없음 숨김</ToolButton>
      <ToolButton aria-label="hide options"><Dots /></ToolButton>
    </ToolGroup>
    <ToolGroup $left={23} $right={20} $gap={40} $short>
      <ToolButton><GearIcon size={28} />클래스 세팅</ToolButton>
      <ToolButton><PencilIcon />클래스 디폴트</ToolButton>
      <ToolButton><PlayGear color="#c0c0c0" />시뮬레이션</ToolButton>
    </ToolGroup>
    <ToolGroup $left={27} $right={20}>
      <PlayGroup>
        <PlayButton $w={51} aria-label="play"><PlayGear color="#8bc34a" /></PlayButton>
        <PlayButton aria-label="step"><StepIcon /></PlayButton>
        <PlayButton aria-label="stop"><StopIcon /></PlayButton>
        <PlayButton aria-label="eject"><EjectIcon /></PlayButton>
        <PlayButton $w={34} $split aria-label="play options"><Dots /></PlayButton>
      </PlayGroup>
    </ToolGroup>
    <SelectSlot>
      <SelectBox $w={358} $pl={9} $pr={30}>
        <select aria-label="debug object"><option>선택된 디버그 오브젝트가 없습니다.</option></select>
        <Chevron />
      </SelectBox>
    </SelectSlot>
  </Toolbar>
)

const ComponentsPanel = () => (
  <Panel $h={392}>
    <TabStrip><Tab active closable icon={<ComponentIcon />} label="컴포넌트" /></TabStrip>
    <PanelTools $h={49} $gap={18}>
      <AddButton><PlusGreen />추가</AddButton>
      <SearchField><SearchIcon /><input placeholder="검색" aria-label="검색" /></SearchField>
    </PanelTools>
    <PanelBody>
      <Tree $pt={5}>
        <TreeRow $h={36} $indent={12}><SphereIcon />TestMaterial_BP (셀프)</TreeRow>
        <TreeRow $h={36} $indent={31}><Triangle /><SceneIcon />DefaultSceneRoot</TreeRow>
        <TreeRow $h={36} $indent={66}><CubeIcon />Cube</TreeRow>
      </Tree>
    </PanelBody>
  </Panel>
)

const Section = ({ title, note, open, h, mb }) => (
  <SectionBar $h={h} $mb={mb}>
    {open ? <Triangle /> : <Spacer />}
    <h2>{title} {note && <small>{note}</small>}</h2>
    <IconButton aria-label={title + ' 추가'}><PlusCircle /></IconButton>
  </SectionBar>
)

const BlueprintPanel = () => (
  <Panel>
    <TabStrip><Tab active closable icon={<BookIcon />} label="내 블루프린트" gap={9} /></TabStrip>
    <PanelTools $h={56} $right={13} $gap={8}>
      <AddButton><PlusGreen />추가</AddButton>
      <SearchField><SearchIcon /><input placeholder="검색" aria-label="검색" /></SearchField>
      <IconButton aria-label="settings"><GearIcon /></IconButton>
    </PanelTools>
    <PanelBody>
      <Section title="그래프" open />
      <Tree $pb={4}>
        <TreeRow $indent={5} $gap={7}><Triangle /><GraphIcon />이벤트그래프</TreeRow>
        {['BeginPlay 이벤트', 'ActorBeginOverlap 이벤트', 'Tick 이벤트'].map(e => (
          <TreeRow key={e} $indent={44} $gap={6}><EventIcon />{e}</TreeRow>
        ))}
      </Tree>
      <Section title="함수" note="(19 오버라이더블)" open h={46} />
      <Tree $pb={4}>
        <TreeRow $h={38} $indent={28}>
          <OverrideMark><OverrideIcon /><FGlyph $size={26} $color="#8a8a8a">f</FGlyph></OverrideMark>
          컨스트럭션 스크립트
        </TreeRow>
      </Tree>
      <Section title="매크로" mb={3} />
      <Section title="변수" open />
      <Tree $pb={4}>
        <TreeRow $h={27} $indent={5} $gap={4}><Triangle />컴포넌트</TreeRow>
        <TreeRow $h={28} $indent={43}><VarName $w={190}>Cube</VarName><Pill /></TreeRow>
        <TreeRow $h={32} $indent={43}><VarName $w={190}>DefaultSceneRoot</VarName><Pill /></TreeRow>
        <TreeRow $h={38} $indent={28} $gap={10}>
          <VarName $w={184}>DynamicMaterial</VarName><Pill /><VarType>머티리얼 인스턴스</VarType><EyeClosed />
        </TreeRow>
      </Tree>
      <Section title="이벤트 디스패처" mb={3} />
      <Section title="로컬 변수" note="(USERCONSTRUCTIONSCRIPT)" />
    </PanelBody>
  </Panel>
)

const BlueprintGraph = () => (
  <Graph>
    <GraphHeader>
      <HeaderCell $gap={10} $after={12}><BookmarkIcon /><Chevron /></HeaderCell>
      <HeaderCell $gap={31} $after={26}><ArrowIcon back /><ArrowIcon /></HeaderCell>
      <Crumbs>
        <CrumbIcon><FGlyph $size={36}>ƒ</FGlyph></CrumbIcon>
        TestMaterial_BP
        <svg width="14" height="24" viewBox="0 0 14 24" fill="none" stroke="#c8c8c8" strokeWidth="3">
          <path d="M2 1l9 11-9 11" />
        </svg>
        Construction Script
      </Crumbs>
      <ZoomLabel>1:1 줌</ZoomLabel>
    </GraphHeader>
    <Wires fill="none">
      <path d="M440 433H593M1000 433H1076" stroke="#fff" strokeWidth="3" />
      <path d="M342 589C430 589 505 480 593 480" stroke="#0d94dc" strokeWidth="2" />
      <path d="M998 480H1078" stroke="#0d94dc" strokeWidth="2" />
    </Wires>
    <Watermark>블루프린트</Watermark>
    <Node $x={190} $y={370} $w={268}>
      <NodeTitle $kind="event" $h={33} $left={12} $gap={7}>
        <svg width="24" height="24" viewBox="0 0 24 24">
          <path d="M1 1h22v21H1z" fill="#a584ad" stroke="#fff" strokeWidth="1.5" />
          <path d="M1 1h22v7H1z" fill="#fff" />
        </svg>
        Construction Script
      </NodeTitle>
      <PinRow $h={55} $end><ExecPin /></PinRow>
    </Node>
    <VarNode $x={166} $y={562} $w={198}><Pin>Cube<DataPin /></Pin></VarNode>
    <Node $x={575} $y={346} $w={443}>
      <NodeTitle $h={57} $left={19} $gap={12}>
        <FGlyph $color="#7cc8f8">ƒ</FGlyph>
        <div>Create Dynamic Material Instance<NodeSub>타깃은 프리미티브 컴포넌트</NodeSub></div>
      </NodeTitle>
      <PinRow $h={52} $pt={6}><ExecPin /><ExecPin /></PinRow>
      <PinRow $h={46}><Pin><DataPin />타깃</Pin><Pin>Return Value<DataPin /></Pin></PinRow>
      <PinRow $h={54}>
        <Pin><DataPin hollow color="#1fbf8a" />Element Index<NodeInput $w={27} defaultValue="0" /></Pin>
      </PinRow>
      <PinRow $h={78}>
        <Pin as="div">
          <DataPin hollow />
          <AssetStack>
            Source Material
            <AssetRow>
              <AssetButton>Test_M<Chevron color="#9a9a9a" /></AssetButton>
              <IconButton aria-label="use selected">
                <svg width="22" height="22" viewBox="0 0 22 22" fill="none" stroke="#4c4c4c" strokeWidth="2">
                  <circle cx="11" cy="11" r="10" /><path d="M17 11H6M10 7l-4 4 4 4" />
                </svg>
              </IconButton>
              <IconButton aria-label="browse asset"><SearchIcon size={22} color="#4c4c4c" /></IconButton>
            </AssetRow>
          </AssetStack>
        </Pin>
      </PinRow>
      <PinRow $h={57}>
        <Pin><DataPin hollow color="#a868d8" />Optional Name<NodeInput $w={72} defaultValue="None" /></Pin>
      </PinRow>
    </Node>
    <SetFrame $x={1050} $y={388} $w={315}>
      <SetBody>
        <SetTitle>SET</SetTitle>
        <PinRow $h={18} $px={21}><ExecPin /><ExecPin hollow /></PinRow>
        <PinRow $h={76} $px={21}><Pin><DataPin />Dynamic Material</Pin><DataPin hollow /></PinRow>
      </SetBody>
    </SetFrame>
  </Graph>
)

const DetailsPanel = () => (
  <Panel>
    <TabStrip><Tab active closable icon={<PencilIcon size={24} />} label="디테일" gap={9} /></TabStrip>
    <PanelTools $h={58} $right={6} $gap={14} $centered>
      <SearchField><SearchIcon /><input placeholder="검색" aria-label="검색" /></SearchField>
      <IconButton aria-label="property matrix"><TableIcon /></IconButton>
      <IconButton aria-label="settings"><GearIcon /></IconButton>
    </PanelTools>
    <PanelBody $light>
      <DetailHead><Triangle color="#8a8a8a" />변수</DetailHead>
      <DetailRow>
        <label htmlFor="name">변수 이름</label>
        <div><TextInput id="name" $w={186} defaultValue="DynamicMaterial" /></div>
        <span />
      </DetailRow>
      <DetailRow $h={41}>
        <label htmlFor="type">변수 타입</label>
        <div>
          <SelectBox $w={186} $h={36} $pl={39} $pr={40}>
            <select id="type"><option>머티리얼 인스턴스 다이내믹</option></select>
            <Chevron />
            <svg width="18" height="10"><rect width="18" height="10" rx="5" fill="#00a8f8" /></svg>
          </SelectBox>
          <Pill /><Chevron />
        </div>
        <span />
      </DetailRow>
      <DetailRow>
        <label htmlFor="desc">설명</label>
        <div><TextInput id="desc" $w={307} /></div>
        <span />
      </DetailRow>
      {detailChecks.map(c => (
        <DetailRow key={c.id} $h={c.h}>
          <label htmlFor={c.id}>{c.label}</label>
          <div><CheckBox id={c.id} type="checkbox" /></div>
          <span />
        </DetailRow>
      ))}
      <DetailRow>
        <label htmlFor="category">카테고리</label>
        <div>
          <ComboBox><TextInput id="category" $w={118} defaultValue="디폴트" /><Chevron /></ComboBox>
        </div>
        <span />
      </DetailRow>
      <DetailRow $h={41}>
        <label htmlFor="replication">리플리케이션</label>
        <div><BigSelect $w={186}><select id="replication"><option>None</option></select><Chevron /></BigSelect></div>
        <span />
      </DetailRow>
      <DetailRow>
        <label htmlFor="condition">리플리케이션 조건</label>
        <div>
          <BigSelect $w={186} $muted>
            <select id="condition" disabled><option>None</option></select><Chevron color="#808080" />
          </BigSelect>
        </div>
        <span />
      </DetailRow>
      <DetailHead $plain><Triangle right color="#8a8a8a" />고급</DetailHead>
      <DetailHead><Triangle color="#8a8a8a" />기본값</DetailHead>
      <MessageRow><Notice>블루프린트를 컴파일해 주세요.</Notice><span /></MessageRow>
    </PanelBody>
  </Panel>
)

const Status = () => (
  <StatusBar>
    <StatusItem $left={15} $right={19} $gap={5}><FolderFind size={26} />콘텐츠 드로어</StatusItem>
    <StatusItem $left={18} $right={16}><LogIcon />출력 로그</StatusItem>
    <StatusItem $left={21} $right={14} $gap={6}>
      <TerminalIcon />Cmd&nbsp;<Chevron size={16} />
      <ConsoleInput placeholder="콘솔 명령을 입력하세요." aria-label="console" />
    </StatusItem>
    <StatusFill />
    <StatusEnd>
      <StatusButton><UnsavedIcon />1 저장되지 않음</StatusButton>
      <StatusButton><BlockIcon />소스 컨트롤</StatusButton>
      <Grip />
    </StatusEnd>
  </StatusBar>
)

const WindowsTaskbar = () => (
  <Taskbar>
    <IconButton aria-label="start"><StartIcon /></IconButton>
    <TaskSearch>
      <SearchIcon color="#e8e8e8" />
      <input placeholder="검색" aria-label="검색" />
      <YarnAndBooks />
    </TaskSearch>
    <TaskButton aria-label="task view"><TaskViewIcon /></TaskButton>
    <TaskButton aria-label="weather"><WeatherIcon /><Badge>1</Badge></TaskButton>
    <TaskButton aria-label="chat"><ChatIcon /></TaskButton>
    <TaskButton aria-label="store"><StoreIcon /></TaskButton>
    <TaskButton aria-label="explorer" $bar="#9a9a9a"><ExplorerIcon /></TaskButton>
    <TaskButton aria-label="edge"><EdgeIcon /></TaskButton>
    <TaskButton aria-label="notes"><NoteIcon /></TaskButton>
    <TaskButton aria-label="sticky notes" $bg="#4a2828" $bar="#ff99a4"><StickyIcon /></TaskButton>
    <TaskButton aria-label="chrome" $bar="#9a9a9a"><ChromeIcon /></TaskButton>
    <TaskButton aria-label="talk" $bar="#9a9a9a"><TalkIcon /></TaskButton>
    <TaskButton aria-label="unreal" $bg="#33323b" $bar="#f5866a" $wide><UnrealTask /></TaskButton>
    <Tray>
      <TrayItem $mr={30} aria-label="hidden icons">
        <svg width="18" height="10" viewBox="0 0 18 10" fill="none" stroke="#fff" strokeWidth="2"><path d="M1 9l8-8 8 8" /></svg>
      </TrayItem>
      <TrayItem $mr={26}>A</TrayItem>
      <TrayItem $mr={12} aria-label="wifi">
        <svg width="24" height="18" viewBox="0 0 24 18" fill="none" stroke="#fff" strokeWidth="1.8">
          <path d="M1 7q11-10 22 0M4.5 10.500q7.500-7 15 0M8 14q4-4 8 0" />
          <circle cx="12" cy="16" r="1.6" fill="#fff" stroke="none" />
        </svg>
      </TrayItem>
      <TrayItem $mr={12} aria-label="volume">
        <svg width="24" height="20" viewBox="0 0 24 20" fill="none" stroke="#fff" strokeWidth="1.8">
          <path d="M1 7h4l5-5v16l-5-5H1z" />
          <path d="M13 7q2 3 0 6M16 4q4 6 0 12" />
          <path d="M19 2q6 8 0 16" stroke="#666" />
        </svg>
      </TrayItem>
      <TrayItem $mr={26} aria-label="battery">
        <svg width="25" height="20" viewBox="0 0 25 20">
          <path d="M9 5h10q2 0 2 2v9q0 2-2 2H4q-2 0-2-2v-4" fill="none" stroke="#fff" strokeWidth="1.8" />
          <path d="M10 7h9v9H4v-3h3zM22 9h2v5h-2zM4 0L0 8h3L2 12l6-7H5l2-5z" fill="#fff" />
        </svg>
      </TrayItem>
      <Clock>오후 3:38<br />2024-01-17</Clock>
      <IconButton aria-label="notifications">
        <svg width="20" height="24" viewBox="0 0 20 24" fill="#f9a07c">
          <path d="M10 0q8 1 8 9v6l2 4H0l2-4V9q0-8 8-9zM6 20h8q-1 4-4 4t-4-4z" />
        </svg>
      </IconButton>
    </Tray>
  </Taskbar>
)

function App() {
  return (
    <Page>
      <GlobalStyle />
      <EditorWindow>
        <Header />
        <MainToolbar />
        <Workspace>
          <SideColumn>
            <ComponentsPanel />
            <BlueprintPanel />
          </SideColumn>
          <CenterColumn>
            <Panel>
              <TabStrip>
                <Tab w={243} icon={<ViewportIcon />} label="뷰포트" gap={10} />
                <Tab w={240} active focus closable icon={<FGlyph>ƒ</FGlyph>} label="Construction Sc..." left={14} gap={15} />
                <Tab w={240} icon={<GraphIcon />} label="이벤트그래프" left={11} />
              </TabStrip>
              <BlueprintGraph />
            </Panel>
            <Panel $h={365}>
              <TabStrip>
                <Tab active closable icon={<LogIcon />} label="컴파일러 결과" left={11} />
                <Tab icon={<SearchIcon />} label="찾기 결과" left={11} gap={10} />
              </TabStrip>
              <ResultsBody><ClearButton>지우기</ClearButton></ResultsBody>
            </Panel>
          </CenterColumn>
          <DetailsColumn><DetailsPanel /></DetailsColumn>
        </Workspace>
        <Status />
      </EditorWindow>
      <WindowsTaskbar />
    </Page>
  )
}

export default App
